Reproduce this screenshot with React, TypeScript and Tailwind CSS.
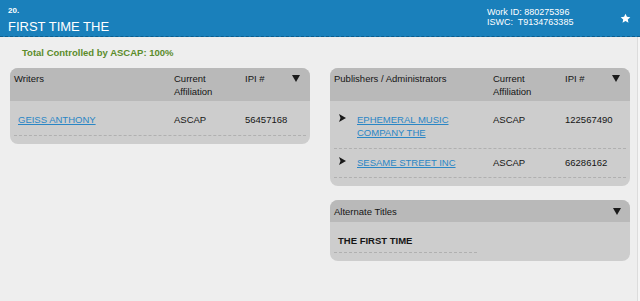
import type { ReactNode } from 'react';

const font = { fontFamily: '"Liberation Sans", Arial, Helvetica, sans-serif' };

function Down() {
  return (
    <svg width="8" height="7" viewBox="0 0 8 7" className="shrink-0">
      <path d="M0 0 H8 L4 7 Z" fill="#1a1a1a" />
    </svg>
  );
}

function Right() {
  return (
    <svg width="7" height="8" viewBox="0 0 7 8" className="mt-[1px] shrink-0">
      <path d="M0 0 L7 4 L0 8 L1.5 4 Z" fill="#1a1a1a" />
    </svg>
  );
}

function Card({ children }: { children: ReactNode }) {
  return <div className="w-[300px] overflow-hidden rounded-[8px] bg-[#cdcdcd] pb-[8px]">{children}</div>;
}

function Link({ children }: { children: ReactNode }) {
  return <span className="text-[#2a86c5] underline underline-offset-[1px]">{children}</span>;
}

export default function App() {
  return (
    <div className="flex min-h-[301px] w-[640px] flex-col bg-[#eeeeee] text-[9.5px] leading-[13px] text-[#151515]" style={font}>
      <header className="flex h-[37px] border-b border-dashed border-[#0d5e8e] bg-[#1a80bb] text-white">
        <div className="flex flex-col pl-[8px] pt-[6px]">
          <span className="text-[8px] font-bold leading-[10px]">20.</span>
          <span className="mt-[3px] text-[13px] leading-[16px]">FIRST TIME THE</span>
        </div>
        <div className="ml-auto flex items-center pr-[9px]">
          <div className="flex w-[133px] flex-col pb-[1px] text-[9px] leading-[9.7px]">
            <span>Work ID: 880275396</span>
            <span className="whitespace-pre">ISWC:  T9134763385</span>
          </div>
          <svg width="11" height="11" viewBox="0 0 24 24" className="shrink-0">
            <path d="M12 1.5 L15.1 8.2 L22.5 9 L17 14 L18.5 21.3 L12 17.6 L5.5 21.3 L7 14 L1.5 9 L8.9 8.2 Z" fill="#ffffff" />
          </svg>
        </div>
      </header>

      <div className="flex flex-1">
        <main className="flex-1 pt-[9px]">
          <p className="pl-[22px] font-bold text-[#5b8c2b]">Total Controlled by ASCAP: 100%</p>

          <div className="mt-[9px] flex items-start gap-[20px] pl-[10px]">
            <Card>
              <div className="flex h-[33px] bg-[#b9b9b9] pl-[4px] pr-[10px] pt-[4px]">
                <span className="w-[160px]">Writers</span>
                <span className="w-[71px]">Current<br />Affiliation</span>
                <span className="flex-1">IPI #</span>
                <span className="pt-[3px]"><Down /></span>
              </div>
              <div className="mx-[4px] flex border-b border-dashed border-[#b0b0b0] pb-[9px] pl-[4px] pt-[12px]">
                <span className="w-[156px]"><Link>GEISS ANTHONY</Link></span>
                <span className="w-[71px]">ASCAP</span>
                <span>56457168</span>
              </div>
            </Card>

            <div className="flex flex-col">
              <Card>
                <div className="flex h-[33px] bg-[#b9b9b9] pl-[4px] pr-[10px] pt-[4px]">
                  <span className="w-[159px]">Publishers / Administrators</span>
                  <span className="w-[72px]">Current<br />Affiliation</span>
                  <span className="flex-1">IPI #</span>
                  <span className="pt-[3px]"><Down /></span>
                </div>
                <div className="mx-[4px] flex border-b border-dashed border-[#b0b0b0] pb-[9px] pl-[5px] pt-[12px]">
                  <span className="w-[18px]"><Right /></span>
                  <span className="w-[136px]"><Link>EPHEMERAL MUSIC<br />COMPANY THE</Link></span>
                  <span className="w-[72px]">ASCAP</span>
                  <span>122567490</span>
                </div>
                <div className="mx-[4px] flex border-b border-dashed border-[#b0b0b0] pb-[8px] pl-[5px] pt-[7px]">
                  <span className="w-[18px]"><Right /></span>
                  <span className="w-[136px]"><Link>SESAME STREET INC</Link></span>
                  <span className="w-[72px]">ASCAP</span>
                  <span>66286162</span>
                </div>
              </Card>

              <div className="mt-[14px]">
                <Card>
                  <div className="flex h-[22px] items-center bg-[#b9b9b9] pl-[4px] pr-[9px]">
                    <span className="flex-1">Alternate Titles</span>
                    <Down />
                  </div>
                  <div className="ml-[4px] w-[143px] border-b border-dashed border-[#b0b0b0] pb-[5px] pl-[4px] pt-[12px] font-bold">
                    THE FIRST TIME
                  </div>
                </Card>
              </div>
            </div>
          </div>
        </main>
        <div className="w-[1px] bg-[#dcdcdc]" />
        <div className="w-[2px] bg-[#f5f5f5]" />
      </div>
    </div>
  );
}
